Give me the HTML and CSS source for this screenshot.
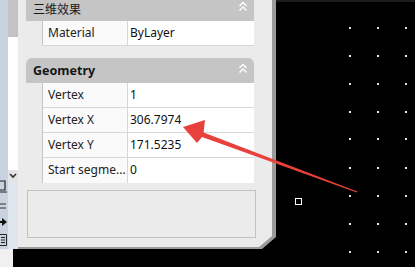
FILE: index.html
```html
<!DOCTYPE html>
<html>
<head>
<meta charset="utf-8">
<link rel="stylesheet" href="styles.css">
</head>
<body>
<div class="app">
  <div class="main">
    <div class="ribbon">
      <div class="ribbon-icons">
        <svg width="8" height="14" viewBox="0 0 8 14"><path d="M0 1h6v9H0" fill="none" stroke="#222" stroke-width="1.2"/><path d="M0 12h8" stroke="#222" stroke-width="1"/></svg>
        <svg width="8" height="8" viewBox="0 0 8 8"><path d="M0 2h7M0 6h7" stroke="#333" stroke-width="1"/></svg>
        <svg width="8" height="8" viewBox="0 0 8 8"><path d="M0 3h3V0l5 4-5 4V5H0z" fill="#111"/></svg>
        <svg width="8" height="12" viewBox="0 0 8 12"><path d="M0 .5h7.5v11H0M2 3.5h4M2 6h4M2 8.5h4" fill="none" stroke="#222" stroke-width="1"/></svg>
      </div>
    </div>
    <div class="scroll">
      <div class="thumb"></div>
      <div class="track"></div>
      <div class="arrow-btn"><svg width="8" height="6" viewBox="0 0 8 6"><path d="M1 1l3 3 3-3" fill="none" stroke="#333" stroke-width="1.6"/></svg></div>
      <div class="scroll-rest"></div>
    </div>
    <div class="palette">
      <div class="palette-inner">
        <section class="group first">
          <div class="group-head"><span class="zh">三维效果</span><svg class="chev" width="10" height="11" viewBox="0 0 10 11"><path d="M1.5 5L5 1.5 8.5 5M1.5 9.5L5 6 8.5 9.5" fill="none" stroke="#fff" stroke-width="1.4"/></svg></div>
          <div class="rows">
            <div class="row short"><div class="label">Material</div><div class="value">ByLayer</div></div>
          </div>
        </section>
        <section class="group second">
          <div class="group-head rounded"><span class="bold">Geometry</span><svg class="chev" width="10" height="11" viewBox="0 0 10 11"><path d="M1.5 5L5 1.5 8.5 5M1.5 9.5L5 6 8.5 9.5" fill="none" stroke="#fff" stroke-width="1.4"/></svg></div>
          <div class="rows">
            <div class="row"><div class="label">Vertex</div><div class="value">1</div></div>
            <div class="row"><div class="label">Vertex X</div><div class="value">306.7974</div></div>
            <div class="row"><div class="label">Vertex Y</div><div class="value">171.5235</div></div>
            <div class="row last"><div class="label">Start segme...</div><div class="value">0</div></div>
          </div>
        </section>
        <div class="desc"></div>
      </div>
    </div>
    <div class="canvas">
      <div class="topline"></div>
      <i class="dot" style="left:73px;top:27px"></i><i class="dot" style="left:101px;top:27px"></i><i class="dot" style="left:129px;top:27px"></i>
      <i class="dot" style="left:73px;top:55px"></i><i class="dot" style="left:101px;top:55px"></i><i class="dot" style="left:129px;top:55px"></i>
      <i class="dot" style="left:73px;top:83px"></i><i class="dot" style="left:101px;top:83px"></i><i class="dot" style="left:129px;top:83px"></i>
      <i class="dot" style="left:73px;top:111px"></i><i class="dot" style="left:101px;top:111px"></i><i class="dot" style="left:129px;top:111px"></i>
      <i class="dot" style="left:73px;top:138px"></i><i class="dot" style="left:101px;top:138px"></i><i class="dot" style="left:129px;top:138px"></i>
      <i class="dot" style="left:73px;top:167px"></i><i class="dot" style="left:101px;top:167px"></i><i class="dot" style="left:129px;top:167px"></i>
      <i class="dot" style="left:73px;top:195px"></i><i class="dot" style="left:101px;top:195px"></i><i class="dot" style="left:129px;top:195px"></i>
      <i class="dot" style="left:73px;top:223px"></i><i class="dot" style="left:101px;top:223px"></i><i class="dot" style="left:129px;top:223px"></i>
      <div class="grip" style="left:19px;top:198px"></div>
    </div>
  </div>
  <div class="footer">
    <div class="patch"></div>
    <div class="canvas-bottom">
      <i class="dot" style="left:336px;top:2px"></i><i class="dot" style="left:364px;top:2px"></i><i class="dot" style="left:392px;top:2px"></i>
    </div>
  </div>
  <svg class="annot" width="415" height="267" viewBox="0 0 415 267">
    <polygon points="183,127 205,120 203.6,132.4 357.3,191.4 356.8,192.6 202,137 197,143" fill="#e8403b"/>
  </svg>
</div>
</body>
</html>
```
FILE: styles.css
```css
html, body {
  margin: 0;
  padding: 0;
  background: #000;
  width: 415px;
  height: 267px;
  overflow: hidden;
  font-family: "Noto Sans", "Liberation Sans", "Noto Sans CJK SC", sans-serif;
  font-size: 12px;
  color: #1a1a1a;
}
.app {
  position: relative;
  width: 415px;
  height: 267px;
  display: flex;
  flex-direction: column;
}
.main {
  display: flex;
  height: 249px;
}
.ribbon {
  width: 8px;
  background: #c8d3df;
  display: flex;
  flex-direction: column;
  justify-content: flex-end;
  overflow: hidden;
}
.ribbon-icons {
  display: flex;
  flex-direction: column;
  gap: 8px;
  padding-bottom: 3px;
  margin-left: -1px;
}
.ribbon-icons svg { display: block; }
.scroll {
  width: 10px;
  display: flex;
  flex-direction: column;
  background: #c8d3df;
}
.thumb { height: 37px; background: #c3c3c3; }
.track { height: 133px; background: #fff; }
.arrow-btn {
  height: 12px;
  background: #e4e4e4;
  display: flex;
  align-items: center;
  justify-content: center;
}
.arrow-btn svg { display: block; }
.scroll-rest { flex: 1; background: #dfe5ec; }
.palette {
  width: 258px;
  background: #9b9b9b;
  clip-path: polygon(0 0, 100% 0, 100% calc(100% - 12px), calc(100% - 14px) 100%, 0 100%);
}
.palette-inner {
  width: 254px;
  height: 247px;
  background: #ebebeb;
  padding-left: 8px;
  box-sizing: border-box;
  clip-path: polygon(0 0, 100% 0, 100% calc(100% - 11px), calc(100% - 13px) 100%, 0 100%);
  display: flex;
  flex-direction: column;
}
.group { width: 228px; }
.group.first { margin-top: -4px; }
.group.second { margin-top: 12px; }
.group-head {
  height: 25px;
  background: #c5c5c5;
  display: flex;
  align-items: center;
  justify-content: space-between;
  padding: 0 6px 0 7px;
  box-sizing: border-box;
}
.group-head.rounded { border-radius: 6px 6px 0 0; }
.group-head .zh {
  font-family: "Noto Sans CJK SC", sans-serif;
  font-size: 12px;
  color: #1a1a1a;
}
.group-head .bold { font-weight: bold; font-size: 12.5px; color: #151515; margin-top: -1px; }
.chev { display: block; margin-top: -4px; }
.rows { margin-left: 16px; }
.row {
  display: flex;
  height: 25px;
  border-bottom: 1px solid #d6d6d6;
  box-sizing: border-box;
}
.row.short { height: 25px; }
.row.last { border-bottom: none; }
.label {
  width: 86px;
  box-sizing: border-box;
  border-left: 1px solid #c4c4c4;
  border-right: 1px solid #d6d6d6;
  background: #fafafa;
  padding-left: 5px;
  padding-bottom: 2px;
  display: flex;
  align-items: center;
  white-space: nowrap;
  color: #222;
}
.value {
  flex: 1;
  background: #fff;
  padding-left: 2px;
  padding-bottom: 2px;
  display: flex;
  align-items: center;
  color: #111;
}
.desc {
  margin-top: 7px;
  margin-left: 1px;
  width: 229px;
  height: 48px;
  box-sizing: border-box;
  border: 1px solid #c2c2c2;
  background: #ebebeb;
}
.canvas {
  flex: 1;
  position: relative;
  background: #000;
}
.topline {
  height: 2px;
  background: #1c1c1c;
}
.dot {
  position: absolute;
  width: 2px;
  height: 2px;
  background: #e6e6e6;
}
.grip {
  position: absolute;
  width: 7px;
  height: 7px;
  box-sizing: border-box;
  border: 1px solid #fff;
}
.footer {
  flex: 1;
  display: flex;
}
.patch { width: 13px; background: #f0f0f0; }
.canvas-bottom { flex: 1; position: relative; background: #000; }
.annot {
  position: absolute;
  left: 0;
  top: 0;
  pointer-events: none;
}
```
